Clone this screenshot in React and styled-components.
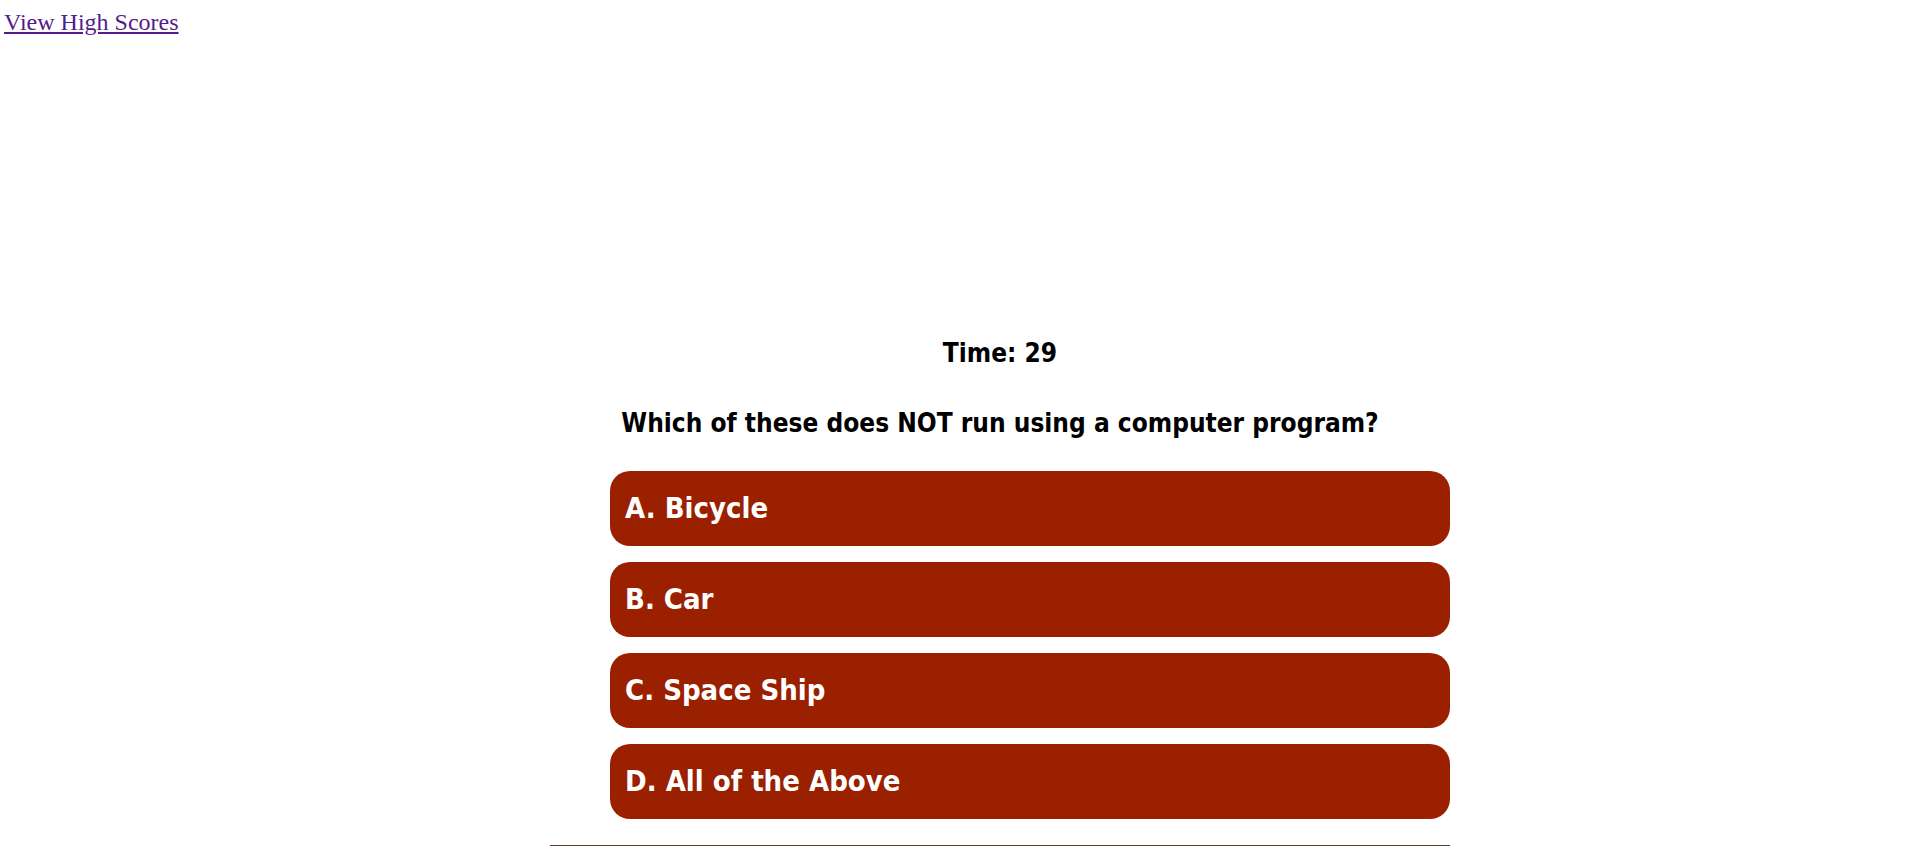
import React from 'react';
import styled, { createGlobalStyle } from 'styled-components';

const GlobalStyle = createGlobalStyle`
  body {
    margin: 0;
    background: #fff;
    font-family: "Liberation Serif", serif;
  }
`;

const Header = styled.header`
  padding: 9px 4px 0;
  height: 338px;
  box-sizing: border-box;
`;

const ScoresLink = styled.a`
  font-size: 24px;
  color: #551a8b;
  text-decoration: underline;
`;

const Quiz = styled.main`
  width: 900px;
  margin-left: 550px;
  font-family: "DejaVu Sans Condensed", "DejaVu Sans", Verdana, sans-serif;
  font-stretch: condensed;
  text-align: center;
`;

const Timer = styled.p`
  margin: 0 0 40px;
  font-size: 26px;
  font-weight: bold;
  line-height: 30px;
  color: #000;
`;

const Question = styled.h2`
  margin: 0 0 33px;
  font-size: 26px;
  font-weight: bold;
  line-height: 30px;
  color: #000;
`;

const Choices = styled.div`
  display: flex;
  flex-direction: column;
  gap: 16px;
  padding-left: 60px;
`;

const Choice = styled.button`
  display: block;
  width: 100%;
  box-sizing: border-box;
  padding: 22px 15px;
  border: none;
  border-radius: 20px;
  background: #9a2000;
  color: #fff;
  font-family: inherit;
  font-stretch: inherit;
  font-size: 29px;
  font-weight: bold;
  line-height: 31px;
  text-align: left;
  cursor: pointer;
`;

const Divider = styled.hr`
  margin: 26px 0 0;
  border: none;
  border-top: 1px solid #5e3b27;
`;

const choices = ['A. Bicycle', 'B. Car', 'C. Space Ship', 'D. All of the Above'];

export default function App() {
  return (
    <>
      <GlobalStyle />
      <Header>
        <ScoresLink href="#">View High Scores</ScoresLink>
      </Header>
      <Quiz>
        <Timer>Time: 29</Timer>
        <Question>Which of these does NOT run using a computer program?</Question>
        <Choices>
          {choices.map((c) => (
            <Choice key={c}>{c}</Choice>
          ))}
        </Choices>
        <Divider />
      </Quiz>
    </>
  );
}
